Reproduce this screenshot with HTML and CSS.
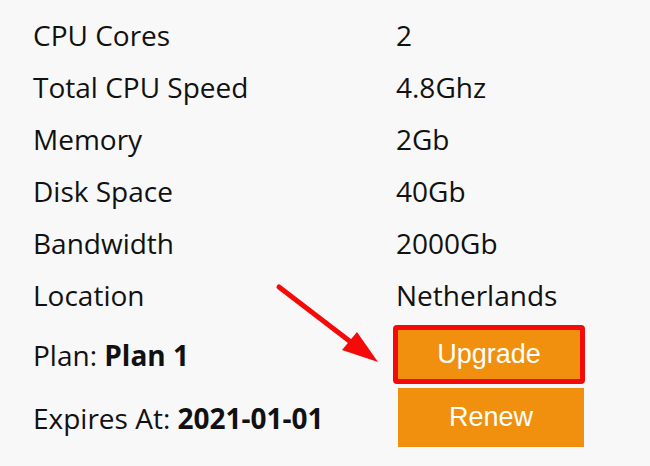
FILE: index.html
```html
<!DOCTYPE html>
<html lang="en">
<head>
    <meta charset="UTF-8">
    <meta name="viewport" content="width=device-width, initial-scale=1.0">
    <title>Server Details</title>
    <link rel="stylesheet" href="styles.css">
</head>
<body>
    <div class="server-info">
        <div class="spec-list">
            <div class="spec-label">CPU Cores</div>
            <div class="spec-value">2</div>

            <div class="spec-label">Total CPU Speed</div>
            <div class="spec-value">4.8Ghz</div>

            <div class="spec-label">Memory</div>
            <div class="spec-value">2Gb</div>

            <div class="spec-label">Disk Space</div>
            <div class="spec-value">40Gb</div>

            <div class="spec-label">Bandwidth</div>
            <div class="spec-value">2000Gb</div>

            <div class="spec-label">Location</div>
            <div class="spec-value">Netherlands</div>

            <div class="spec-label action-row">Plan: <strong>Plan 1</strong></div>
            <div class="spec-value action-row">
                <div class="highlight">
                    <button class="action-btn" id="upgrade">Upgrade</button>
                </div>
            </div>

            <div class="spec-label action-row">Expires At: <strong>2021-01-01</strong></div>
            <div class="spec-value action-row">
                <button class="action-btn renew-btn" id="renew">Renew</button>
            </div>
        </div>

        <!-- annotation arrow pointing at the upgrade button -->
        <svg class="pointer-arrow" width="650" height="466" viewBox="0 0 650 466">
            <line x1="279" y1="287" x2="356" y2="346" stroke="#f50a0a" stroke-width="5" stroke-linecap="round"/>
            <polygon points="378,362 342,350 357,332" fill="#f50a0a"/>
        </svg>
    </div>
</body>
</html>
```

FILE: styles.css
```css
html, body {
    margin: 0;
    padding: 0;
    background-color: #f8f8f8;
}
body {
    font-family: 'Open Sans', 'Noto Sans', sans-serif;
    color: #111;
}
.server-info {
    position: relative;
    width: 650px;
    height: 466px;
    overflow: hidden;
}
.spec-list {
    display: grid;
    grid-template-columns: 363px 1fr;
    grid-template-rows: repeat(6, 52px) auto auto;
    padding: 9px 0 0 33px;
    font-size: 28px;
}
.spec-label,
.spec-value {
    display: flex;
    align-items: center;
    white-space: pre;
}
.spec-label strong {
    font-weight: 700;
}
.action-row {
    height: 59px;
    margin-top: 4px;
}
.highlight {
    margin-left: -3px;
    border: 5px solid #f50a0a;
    border-radius: 4px;
    display: flex;
}
.action-btn {
    font-family: 'Liberation Sans', Arial, sans-serif;
    font-size: 27px;
    color: #fff;
    background-color: #f0900e;
    border: none;
    border-radius: 0;
    padding: 0;
    width: 182px;
    height: 49px;
    cursor: pointer;
}
.renew-btn {
    margin-left: 2px;
    width: 186px;
    height: 59px;
}
.pointer-arrow {
    position: absolute;
    left: 0;
    top: 0;
    pointer-events: none;
}
```
